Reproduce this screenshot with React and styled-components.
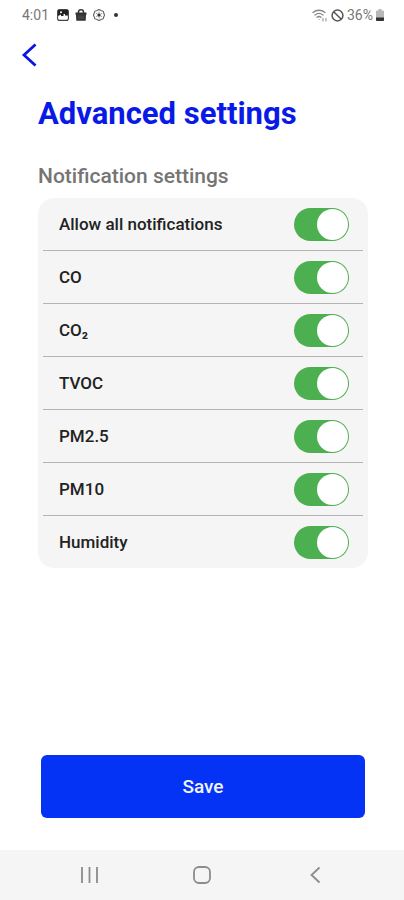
import React, { useState } from 'react';
import styled, { createGlobalStyle } from 'styled-components';

const GlobalStyle = createGlobalStyle`
  * {
    box-sizing: border-box;
  }

  body {
    margin: 0;
    background: #fff;
    font-family: Roboto, 'Liberation Sans', sans-serif;
  }

  button {
    padding: 0;
    border: 0;
    background: none;
    color: inherit;
    font: inherit;
    cursor: pointer;
  }

  svg {
    display: block;
  }
`;

const Screen = styled.div`
  display: flex;
  flex-direction: column;
  min-height: 100vh;
`;

const StatusBar = styled.header`
  display: flex;
  justify-content: space-between;
  align-items: center;
  height: 30px;
  padding: 0 20px 0 22px;
  color: #777;
  font-size: 14px;
`;

const StatusGroup = styled.div`
  display: flex;
  align-items: center;
  gap: ${({ $gap }) => $gap}px;
`;

const Clock = styled.time`
  margin-right: 2px;
`;

const Dot = styled.span`
  width: 4px;
  height: 4px;
  margin-left: 3px;
  border-radius: 50%;
  background: #333;
`;

const BackButton = styled.button`
  align-self: flex-start;
  margin-left: 20px;
  padding: 12px 0;
  color: #0a14e6;
`;

const Content = styled.main`
  display: flex;
  flex: 1;
  flex-direction: column;
  padding: 14px 36px 32px 38px;
`;

const Title = styled.h1`
  margin: 0;
  color: #0a1ae6;
  font-size: 31px;
  font-weight: 700;
  line-height: 40px;
`;

const Subtitle = styled.h2`
  margin: 30px 0 10px;
  color: #757575;
  font-size: 21px;
  font-weight: 500;
  line-height: 24px;
`;

const Card = styled.ul`
  margin: 0;
  padding: 0 5px;
  border-radius: 16px;
  background: #f5f5f5;
  list-style: none;
`;

const Row = styled.li`
  & + & {
    border-top: 1px solid #b4b4b4;
  }
`;

const RowLabel = styled.label`
  display: flex;
  justify-content: space-between;
  align-items: center;
  height: 52px;
  padding: 0 14px 0 16px;
  color: #222;
  font-size: 17px;
  font-weight: 500;
  cursor: pointer;
`;

const Toggle = styled.input`
  display: flex;
  align-items: center;
  width: 55px;
  height: 33px;
  margin: 0;
  padding: 0 1px;
  border-radius: 17px;
  background: #bdbdbd;
  appearance: none;
  cursor: pointer;

  &::before {
    content: '';
    width: 31px;
    height: 31px;
    border-radius: 50%;
    background: #fff;
  }

  &:checked {
    justify-content: flex-end;
    background: #4caf50;
  }
`;

const SaveButton = styled.button`
  height: 63px;
  margin: auto 3px 0;
  border-radius: 6px;
  background: #0433f5;
  color: #f0f4ff;
  font-size: 19px;
  font-weight: 500;
`;

const NavBar = styled.nav`
  display: flex;
  justify-content: space-between;
  align-items: center;
  height: 50px;
  padding: 0 76px;
  background: #f5f5f5;
  color: #8c8c8c;
`;

const PictureIcon = () => (
  <svg width="12" height="12" viewBox="0 0 12 12">
    <rect x="0.6" y="0.6" width="10.8" height="10.8" rx="2" fill="#fff" stroke="#444" strokeWidth="1.1" />
    <path d="M1 1h10v5.5H8V5H6.5v2H4V5.5L1 7z" fill="#222" />
    <circle cx="4" cy="3.2" r="1" fill="#fff" />
  </svg>
);

const BagIcon = () => (
  <svg width="12" height="12" viewBox="0 0 12 12">
    <path d="M3.5 4.5V3a2.5 2.2 0 0 1 5 0v1.5" fill="none" stroke="#333" strokeWidth="1.5" />
    <path d="M0.5 3.4h11v2.4h-.5l-.3 5.9H1.3L1 5.8H.5z" fill="#333" />
    <path d="M4 6.5v3.5M6 6.5v3.5M8 6.5v3.5" stroke="#777" strokeWidth="0.5" />
  </svg>
);

const GearIcon = () => (
  <svg width="12" height="12" viewBox="0 0 12 12" fill="none" stroke="#666">
    <path d="M6 .4l2 1 2.3.9.5 2 .8 1.7-.8 1.7-.5 2-2.3.9-2 1-2-1-2.3-.9-.5-2L.4 6l.8-1.7.5-2L4 1.4z" strokeWidth="1.1" />
    <path d="M6 2.5v7M2.8 4.2l6.4 3.6M9.2 4.2L2.8 7.8" strokeWidth="0.6" />
    <circle cx="6" cy="6" r="1.5" fill="#333" stroke="none" />
  </svg>
);

const WifiIcon = () => (
  <svg width="16" height="13" viewBox="0 0 16 13" fill="none" stroke="#888" strokeLinecap="round">
    <path d="M1 3.5c3.5-3 8.5-3 12 0M3 6c2.4-2 5.6-2 8 0M5 8.3c1.3-1 2.7-1 4 0" strokeWidth="1.3" />
    <path d="M7 10.5v.1M11 9.5v2.5M14 9.5v2.5" strokeWidth="1" />
  </svg>
);

const BlockedIcon = () => (
  <svg width="13" height="13" viewBox="0 0 12 12" fill="none" stroke="#555" strokeWidth="1.4">
    <circle cx="6" cy="6" r="5" />
    <path d="M2.5 2.5l7 7" />
  </svg>
);

const BatteryIcon = () => (
  <svg width="8" height="12" viewBox="0 0 8 12">
    <path d="M2.5 0h3v1.5H7a1 1 0 0 1 1 1V11a1 1 0 0 1-1 1H1a1 1 0 0 1-1-1V2.5a1 1 0 0 1 1-1h1.5z" fill="#b8b8b8" />
    <path d="M0 8.5h8V11a1 1 0 0 1-1 1H1a1 1 0 0 1-1-1z" fill="#333" />
  </svg>
);

const settings = [
  { id: 'all', name: 'Allow all notifications' },
  { id: 'co', name: 'CO' },
  { id: 'co2', name: 'CO₂' },
  { id: 'tvoc', name: 'TVOC' },
  { id: 'pm25', name: 'PM2.5' },
  { id: 'pm10', name: 'PM10' },
  { id: 'humidity', name: 'Humidity' },
];

const allValues = value => Object.fromEntries(settings.map(({ id }) => [id, value]));

const App = () => {
  const [values, setValues] = useState(allValues(true));

  const handleChange = id => e => {
    const { checked } = e.target;
    setValues(id === 'all' ? allValues(checked) : { ...values, [id]: checked });
  };

  return (
    <Screen>
      <GlobalStyle />
      <StatusBar>
        <StatusGroup $gap={6}>
          <Clock>4:01</Clock>
          <PictureIcon />
          <BagIcon />
          <GearIcon />
          <Dot />
        </StatusGroup>
        <StatusGroup $gap={3}>
          <WifiIcon />
          <BlockedIcon />
          <span>36%</span>
          <BatteryIcon />
        </StatusGroup>
      </StatusBar>

      <BackButton type="button" aria-label="Back">
        <svg width="18" height="26" viewBox="0 0 18 26" fill="none" stroke="currentColor" strokeWidth="2.8">
          <path d="M15.5 2.5L4 13l11.5 10.5" />
        </svg>
      </BackButton>

      <Content>
        <Title>Advanced settings</Title>
        <Subtitle>Notification settings</Subtitle>
        <Card>
          {settings.map(({ id, name }) => (
            <Row key={id}>
              <RowLabel htmlFor={id}>
                {name}
                <Toggle
                  type="checkbox"
                  role="switch"
                  id={id}
                  checked={values[id]}
                  onChange={handleChange(id)}
                />
              </RowLabel>
            </Row>
          ))}
        </Card>
        <SaveButton type="button">Save</SaveButton>
      </Content>

      <NavBar>
        <button type="button" aria-label="Recent apps">
          <svg width="26" height="20" viewBox="0 0 26 20" fill="none" stroke="currentColor" strokeWidth="1.8">
            <path d="M6 2v16M13.5 2v16M21 2v16" />
          </svg>
        </button>
        <button type="button" aria-label="Home">
          <svg width="20" height="20" viewBox="0 0 20 20" fill="none" stroke="currentColor" strokeWidth="1.8">
            <rect x="2" y="2" width="16" height="16" rx="5" />
          </svg>
        </button>
        <button type="button" aria-label="Go back">
          <svg width="26" height="20" viewBox="0 0 26 20" fill="none" stroke="currentColor" strokeWidth="1.8">
            <path d="M17.5 2.5L9.5 10l8 7.5" />
          </svg>
        </button>
      </NavBar>
    </Screen>
  );
};

export default App;
